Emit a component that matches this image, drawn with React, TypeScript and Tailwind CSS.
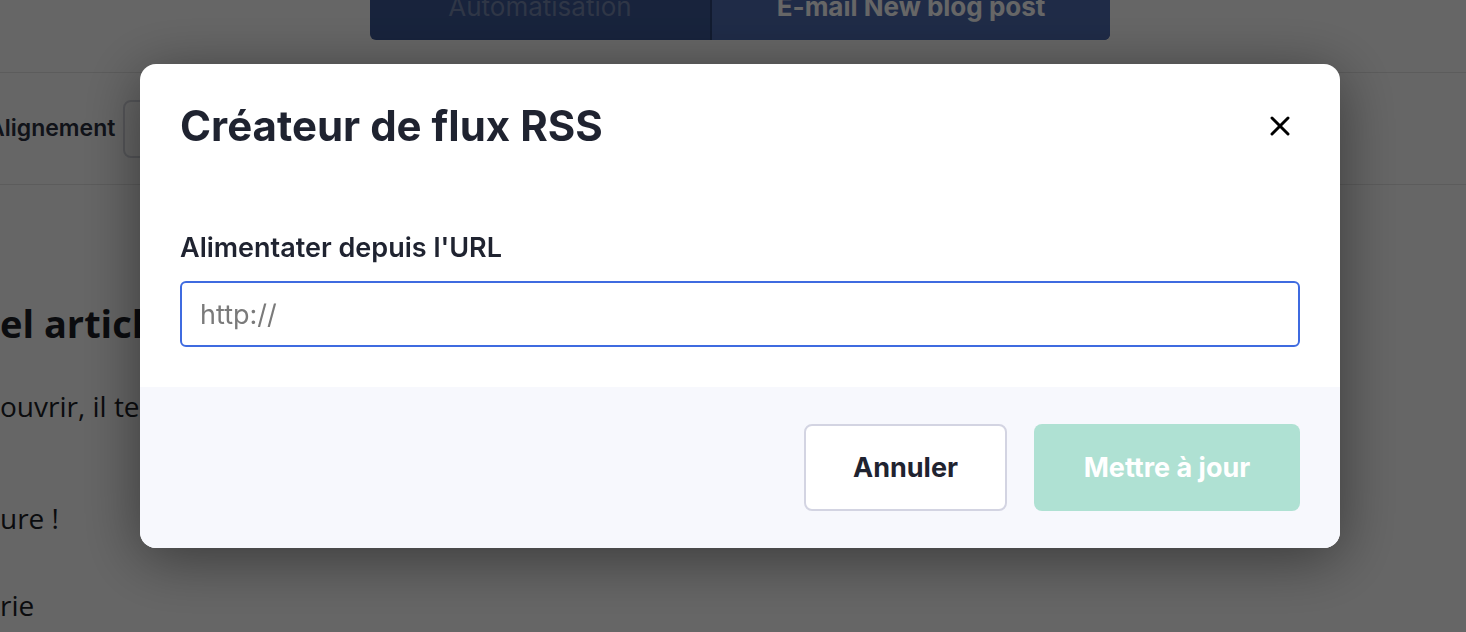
import { X } from 'lucide-react'

const plex = { fontFamily: 'Inter, "Noto Sans", sans-serif' }

function Page() {
    return (
        <div className="min-h-[632px] bg-white overflow-hidden" style={{ fontFamily: '"Open Sans", sans-serif' }}>
            {/* Top step bar */}
            <div className="h-[73px] border-b border-[#e6e6e6] flex">
                <div className="ml-[370px] w-[740px] h-[40px] flex rounded-b-[6px] overflow-hidden bg-[#3c5896]" style={plex}>
                    <div className="w-[340px] flex justify-center">
                        <span className="mt-[-6px] text-[26px] leading-[26px] text-[#7587b0]">Automatisation</span>
                    </div>
                    <div className="flex-1 flex justify-center bg-[#4e6cb2] border-l-2 border-[#2d4578]">
                        <span className="mt-[-6px] text-[26px] leading-[26px] font-bold text-white">E-mail New blog post</span>
                    </div>
                </div>
            </div>

            {/* Toolbar */}
            <div className="h-[112px] border-b border-[#e6e6e6] flex items-center gap-[8px]" style={plex}>
                <span className="-ml-[12px] text-[23px] font-semibold text-[#2b3040]">Alignement</span>
                <div className="w-[120px] h-[58px] rounded-[8px] border-2 border-[#d6d8e0]" />
            </div>

            {/* Editor content */}
            <div className="text-[#1c1e26]">
                <div className="mt-[114px] text-[38px] leading-[48px] font-bold">el article</div>
                <div className="mt-[41px] text-[28px] leading-[36px]">ouvrir, il te</div>
                <div className="mt-[76px] text-[28px] leading-[36px]">ure !</div>
                <div className="mt-[51px] text-[28px] leading-[36px]">rie</div>
            </div>
        </div>
    )
}

export default function App() {
    return (
        <div className="relative w-[1466px] h-[632px] overflow-hidden">
            <Page />

            {/* Overlay + modal */}
            <div className="fixed inset-0 bg-black/60 pt-[64px] pl-[140px]">
                <div className="w-[1200px] rounded-[16px] bg-white overflow-hidden shadow-[0_10px_60px_rgba(0,0,0,0.45)]" style={plex}>
                    <div className="px-10 pt-[38px] pb-10">
                        <div className="flex items-center justify-between">
                            <h2 className="text-[42px] leading-[48px] font-bold text-[#1f2330]">Créateur de flux RSS</h2>
                            <X className="w-[32px] h-[32px] text-black mr-[4px]" strokeWidth={2.2} />
                        </div>
                        <label className="block mt-[81px] text-[27px] leading-[34px] font-semibold text-[#1f2330]">Alimentater depuis l'URL</label>
                        <input
                            placeholder="http://"
                            className="mt-[16px] w-full h-[66px] rounded-[6px] border-2 border-[#3f6be0] px-[18px] text-[27px] text-[#1f2330] placeholder:text-[#7a7a7a] outline-none"
                        />
                    </div>
                    <div className="bg-[#f7f8fd] h-[161px] px-10 flex items-center justify-end gap-[27px]">
                        <button className="w-[203px] h-[87px] rounded-[8px] border-2 border-[#d3d4e2] bg-white pt-[2px] text-[27px] font-bold text-[#1f2330]">Annuler</button>
                        <button className="w-[266px] h-[87px] rounded-[8px] bg-[#afe1d3] pt-[2px] text-[27px] font-bold text-white">Mettre à jour</button>
                    </div>
                </div>
            </div>
        </div>
    )
}
